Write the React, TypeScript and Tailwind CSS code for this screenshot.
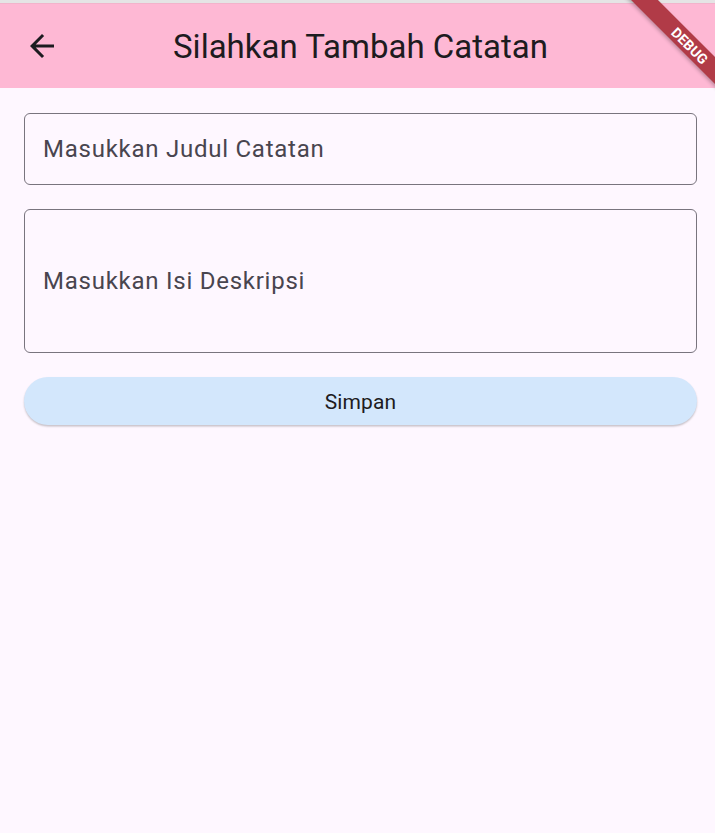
import React from "react";

export default function App() {
  return (
    <div
      className="relative h-[833px] w-full overflow-hidden bg-[#fef7ff]"
      style={{ fontFamily: "Roboto, 'Liberation Sans', sans-serif" }}
    >
      <div className="h-[3px] bg-[#e5e4e5]" />
      <div className="h-[1px] bg-[#f2b3cb]" />
      <header className="flex h-[84px] items-center bg-[#feb8d4] pl-[24px] pr-[18px]">
        <button className="flex h-[36px] w-[36px] items-center justify-center text-[#1d1b20]">
          <svg width="36" height="36" viewBox="0 0 24 24" fill="currentColor">
            <path d="M20 11H7.83l5.59-5.59L12 4l-8 8 8 8 1.41-1.41L7.83 13H20v-2z" />
          </svg>
        </button>
        <h1 className="flex-1 pr-[36px] text-center text-[33px] font-normal leading-none text-[#1d1b20]">
          Silahkan Tambah Catatan
        </h1>
      </header>

      <main className="flex flex-col gap-[24px] pb-[24px] pl-[24px] pr-[18px] pt-[25px]">
        <div className="flex h-[72px] items-center rounded-[6px] border-[1.5px] border-[#79747e] pl-[18px]">
          <span className="text-[24px] tracking-[0.75px] text-[#49454f]">
            Masukkan Judul Catatan
          </span>
        </div>
        <div className="flex h-[144px] items-center rounded-[6px] border-[1.5px] border-[#79747e] pl-[18px]">
          <span className="text-[24px] tracking-[0.75px] text-[#49454f]">
            Masukkan Isi Deskripsi
          </span>
        </div>
        <button className="flex h-[48px] items-center justify-center rounded-full bg-[#d3e7fc] pt-[3px] text-[21px] tracking-[0.15px] text-[#1d1b20] shadow-[0_1.5px_2px_rgba(0,0,0,0.22)]">
          Simpan
        </button>
      </main>

      <div className="pointer-events-none absolute left-[590px] top-[36px] flex h-[19px] w-[200px] rotate-45 items-center justify-center bg-[#b13b47] shadow-[0_2px_4px_rgba(0,0,0,0.25)]">
        <span className="text-[14px] font-bold leading-none text-white">DEBUG</span>
      </div>
    </div>
  );
}
